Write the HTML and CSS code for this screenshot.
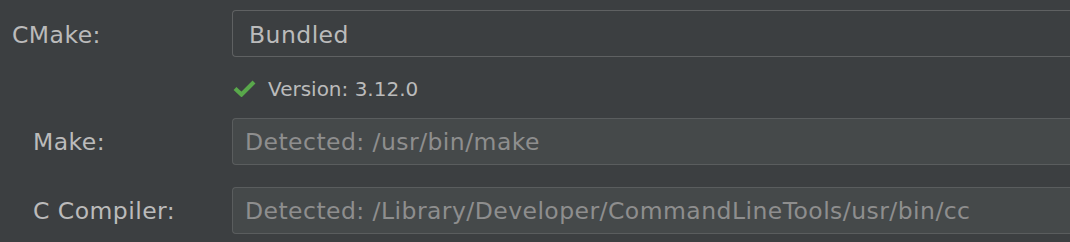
FILE: index.html
```html
<!DOCTYPE html>
<html>
    <head>
        <meta charset="UTF-8">
        <title>Toolchains</title>
        <link rel="stylesheet" href="styles.css">
    </head>
    <body>
        <div class="form">
            <div class="row row-cmake">
                <div class="label">CMake:</div>
                <div class="field">Bundled</div>
            </div>
            <div class="row row-version">
                <div class="label"></div>
                <div class="status">
                    <svg class="check" width="23" height="17" viewBox="0 0 23 17">
                        <path d="M2 8.5 L8.5 14.5 L21 2" fill="none" stroke="#59a84b" stroke-width="4.2" stroke-linejoin="miter"/>
                    </svg>
                    <span>Version: 3.12.0</span>
                </div>
            </div>
            <div class="row row-make">
                <div class="label sub">Make:</div>
                <div class="field disabled">Detected: /usr/bin/make</div>
            </div>
            <div class="row row-cc">
                <div class="label sub">C Compiler:</div>
                <div class="field disabled">Detected: /Library/Developer/CommandLineTools/usr/bin/cc</div>
            </div>
        </div>
    </body>
</html>
```

FILE: styles.css
```css
html, body { height: 100%; margin: 0; background: #3c3f41; overflow: hidden; }
* { box-sizing: border-box; }
.form { font-family: "DejaVu Sans", "Liberation Sans", sans-serif; font-size: 23.5px; letter-spacing: 0.45px; color: #bbbbbb; padding-top: 10px; }
.row { display: flex; align-items: center; }
.label { width: 232px; flex: none; padding-left: 12px; }
.label.sub { padding-left: 33px; }
.row-cmake .label { padding-top: 2px; }
.field { flex: 1; min-width: 0; height: 47px; border: 1.5px solid #5f6162; border-right: none; border-radius: 4px 0 0 4px; padding-left: 16px; display: flex; align-items: center; white-space: nowrap; }
.row-cmake .field { padding-top: 2px; }
.field.disabled { background: #45494a; color: #8e8e8e; padding-left: 12px; border-color: #5a5d5e; }
.row-version { height: 61px; }
.status { display: flex; align-items: center; font-size: 20px; letter-spacing: 0; padding-left: 1px; padding-top: 2px; }
.check { margin-right: 12px; }
.row-cc { margin-top: 22px; }
```
